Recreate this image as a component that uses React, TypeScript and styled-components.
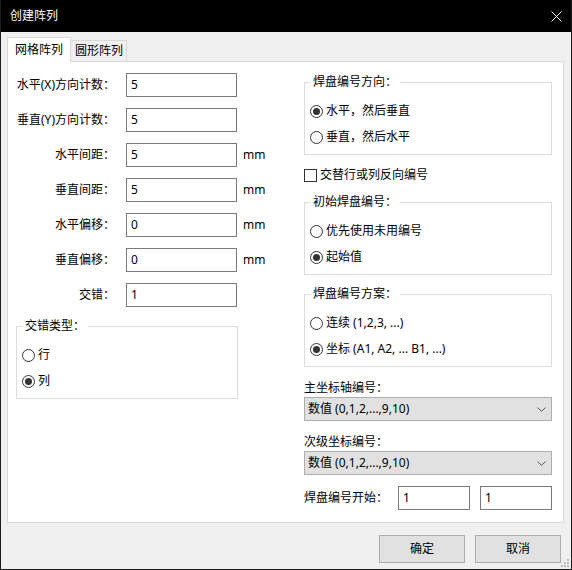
import React from "react";
import styled, { createGlobalStyle } from "styled-components";

const Global = createGlobalStyle`
  html, body { margin: 0; padding: 0; background: #f0f0f0; }
  body {
    font-family: "Noto Sans", "Noto Sans CJK SC", sans-serif;
    font-size: 12px;
    line-height: 16px;
    color: #000;
  }
  * { box-sizing: border-box; }
`;

const Window = styled.div`
  position: relative;
  width: 572px;
  height: 570px;
  display: flex;
  flex-direction: column;
  background: #f0f0f0;
  border: 1px solid #1c1c1c;
  border-top: none;
`;

const TitleBar = styled.div`
  height: 32px;
  flex: none;
  display: flex;
  align-items: center;
  padding: 0 9px 0 9px;
  background: #000;
  color: #fff;
`;

const Title = styled.span`
  flex: 1;
  font-size: 12px;
`;

const Body = styled.div`
  flex: 1;
  display: flex;
  flex-direction: column;
  padding: 5px 7px 0 6px;
`;

const TabStrip = styled.div`
  position: relative;
  z-index: 1;
  display: flex;
  align-items: flex-end;
  height: 25px;
  margin-bottom: -1px;
`;

const Tab = styled.div<{ $active?: boolean }>`
  display: flex;
  align-items: center;
  height: ${(p) => (p.$active ? "25px" : "21px")};
  margin-bottom: ${(p) => (p.$active ? "0" : "1px")};
  padding: ${(p) => (p.$active ? "0 7px" : "0 3px 0 4px")};
  background: ${(p) => (p.$active ? "#fff" : "#f0f0f0")};
  border: 1px solid #d9d9d9;
  border-bottom: none;
  ${(p) => (p.$active ? "" : "border-left: none;")}
  white-space: nowrap;
`;

const Panel = styled.div`
  height: 462px;
  flex: none;
  background: #fff;
  border: 1px solid #d9d9d9;
  padding: 11px 10px 0 8px;
  display: grid;
  grid-template-columns: 274px 248px;
  column-gap: 14px;
  align-items: start;
`;

const Column = styled.div`
  display: flex;
  flex-direction: column;
`;

const FieldGrid = styled.div`
  display: grid;
  grid-template-columns: 105px 111px auto;
  grid-auto-rows: 24px;
  column-gap: 5px;
  row-gap: 11px;
  align-items: center;
`;

const FieldLabel = styled.span`
  text-align: right;
  white-space: nowrap;
  padding-right: 6px;
`;

const TextBox = styled.div<{ $w?: number }>`
  height: 24px;
  width: ${(p) => (p.$w ? `${p.$w}px` : "100%")};
  display: flex;
  align-items: center;
  padding: 0 4px;
  background: #fff;
  border: 1px solid #7a7a7a;
  white-space: nowrap;
`;

const Unit = styled.span`
  padding-left: 1px;
`;

const Group = styled.fieldset<{ $mt: number; $w: number }>`
  margin: ${(p) => p.$mt}px 0 0 0;
  width: ${(p) => p.$w}px;
  min-width: 0;
  border: 1px solid #dcdcdc;
  padding: 13px 5px 9px 5px;
  display: flex;
  flex-direction: column;
  gap: 10px;
`;

const Legend = styled.legend`
  padding: 0 3px;
  margin: 0;
  line-height: 16px;
  white-space: nowrap;
`;

const OptionRow = styled.div<{ $mt?: number }>`
  display: flex;
  align-items: center;
  gap: 3px;
  height: 16px;
  white-space: nowrap;
  margin-top: ${(p) => p.$mt ?? 0}px;
`;

const RadioCircle = styled.span<{ $checked?: boolean }>`
  width: 13px;
  height: 13px;
  flex: none;
  border-radius: 50%;
  border: 1px solid #333;
  background: #fff;
  display: flex;
  align-items: center;
  justify-content: center;
  &::after {
    content: "";
    width: 7px;
    height: 7px;
    border-radius: 50%;
    background: ${(p) => (p.$checked ? "#333" : "transparent")};
  }
`;

const CheckSquare = styled.span`
  width: 13px;
  height: 13px;
  flex: none;
  border: 1px solid #333;
  background: #fff;
`;

const SmallLabel = styled.div<{ $mt: number }>`
  margin-top: ${(p) => p.$mt}px;
  height: 16px;
  white-space: nowrap;
`;

const Select = styled.div`
  margin-top: 1px;
  height: 24px;
  display: flex;
  align-items: center;
  justify-content: space-between;
  padding: 0 5px 0 3px;
  background: #e1e1e1;
  border: 1px solid #adadad;
  white-space: nowrap;
`;

const StartRow = styled.div`
  margin-top: 11px;
  display: flex;
  align-items: center;
  gap: 10px;
`;

const StartLabel = styled.span`
  width: 84px;
  white-space: nowrap;
`;

const ButtonRow = styled.div`
  margin-top: 12px;
  padding-right: 3px;
  display: flex;
  justify-content: flex-end;
  gap: 10px;
`;

const Button = styled.button`
  width: 86px;
  height: 28px;
  font: inherit;
  color: #000;
  background: #e1e1e1;
  border: 1px solid #adadad;
  padding: 0;
`;

const Grip = styled.svg`
  position: absolute;
  right: 1px;
  bottom: 1px;
`;

const Radio = ({ checked, children }: { checked?: boolean; children: React.ReactNode }) => (
  <OptionRow>
    <RadioCircle $checked={checked} />
    <span>{children}</span>
  </OptionRow>
);

const Chevron = () => (
  <svg width="9" height="5" viewBox="0 0 9 5">
    <polyline points="0.5,0.5 4.5,4.3 8.5,0.5" fill="none" stroke="#555" strokeWidth="1" />
  </svg>
);

const fields: { label: string; value: string; unit?: string }[] = [
  { label: "水平(X)方向计数：", value: "5" },
  { label: "垂直(Y)方向计数：", value: "5" },
  { label: "水平间距：", value: "5", unit: "mm" },
  { label: "垂直间距：", value: "5", unit: "mm" },
  { label: "水平偏移：", value: "0", unit: "mm" },
  { label: "垂直偏移：", value: "0", unit: "mm" },
  { label: "交错：", value: "1" },
];

export default function App() {
  return (
    <>
      <Global />
      <Window>
        <TitleBar>
          <Title>创建阵列</Title>
          <svg width="11" height="11" viewBox="0 0 11 11">
            <path d="M0.5 0.5 L10.5 10.5 M10.5 0.5 L0.5 10.5" stroke="#fff" strokeWidth="1" />
          </svg>
        </TitleBar>
        <Body>
          <TabStrip>
            <Tab $active>网格阵列</Tab>
            <Tab>圆形阵列</Tab>
          </TabStrip>
          <Panel>
            <Column>
              <FieldGrid>
                {fields.map((f) => (
                  <React.Fragment key={f.label}>
                    <FieldLabel>{f.label}</FieldLabel>
                    <TextBox>{f.value}</TextBox>
                    <Unit>{f.unit ?? ""}</Unit>
                  </React.Fragment>
                ))}
              </FieldGrid>
              <Group $mt={11} $w={222}>
                <Legend>交错类型：</Legend>
                <Radio>行</Radio>
                <Radio checked>列</Radio>
              </Group>
            </Column>
            <Column>
              <Group $mt={1} $w={248}>
                <Legend>焊盘编号方向：</Legend>
                <Radio checked>水平，然后垂直</Radio>
                <Radio>垂直，然后水平</Radio>
              </Group>
              <OptionRow $mt={12}>
                <CheckSquare />
                <span>交替行或列反向编号</span>
              </OptionRow>
              <Group $mt={11} $w={248}>
                <Legend>初始焊盘编号：</Legend>
                <Radio>优先使用未用编号</Radio>
                <Radio checked>起始值</Radio>
              </Group>
              <Group $mt={11} $w={248}>
                <Legend>焊盘编号方案：</Legend>
                <Radio>连续 (1,2,3, ...)</Radio>
                <Radio checked>坐标 (A1, A2, ... B1, ...)</Radio>
              </Group>
              <SmallLabel $mt={13}>主坐标轴编号：</SmallLabel>
              <Select>
                <span>数值 (0,1,2,...,9,10)</span>
                <Chevron />
              </Select>
              <SmallLabel $mt={13}>次级坐标编号：</SmallLabel>
              <Select>
                <span>数值 (0,1,2,...,9,10)</span>
                <Chevron />
              </Select>
              <StartRow>
                <StartLabel>焊盘编号开始：</StartLabel>
                <TextBox $w={72}>1</TextBox>
                <TextBox $w={72}>1</TextBox>
              </StartRow>
            </Column>
          </Panel>
          <ButtonRow>
            <Button>确定</Button>
            <Button>取消</Button>
          </ButtonRow>
        </Body>
        <Grip width="9" height="9" viewBox="0 0 9 9">
          <rect x="6" y="0" width="2" height="2" fill="#bcbcbc" />
          <rect x="3" y="3" width="2" height="2" fill="#bcbcbc" />
          <rect x="6" y="3" width="2" height="2" fill="#bcbcbc" />
          <rect x="0" y="6" width="2" height="2" fill="#bcbcbc" />
          <rect x="3" y="6" width="2" height="2" fill="#bcbcbc" />
          <rect x="6" y="6" width="2" height="2" fill="#bcbcbc" />
        </Grip>
      </Window>
    </>
  );
}
